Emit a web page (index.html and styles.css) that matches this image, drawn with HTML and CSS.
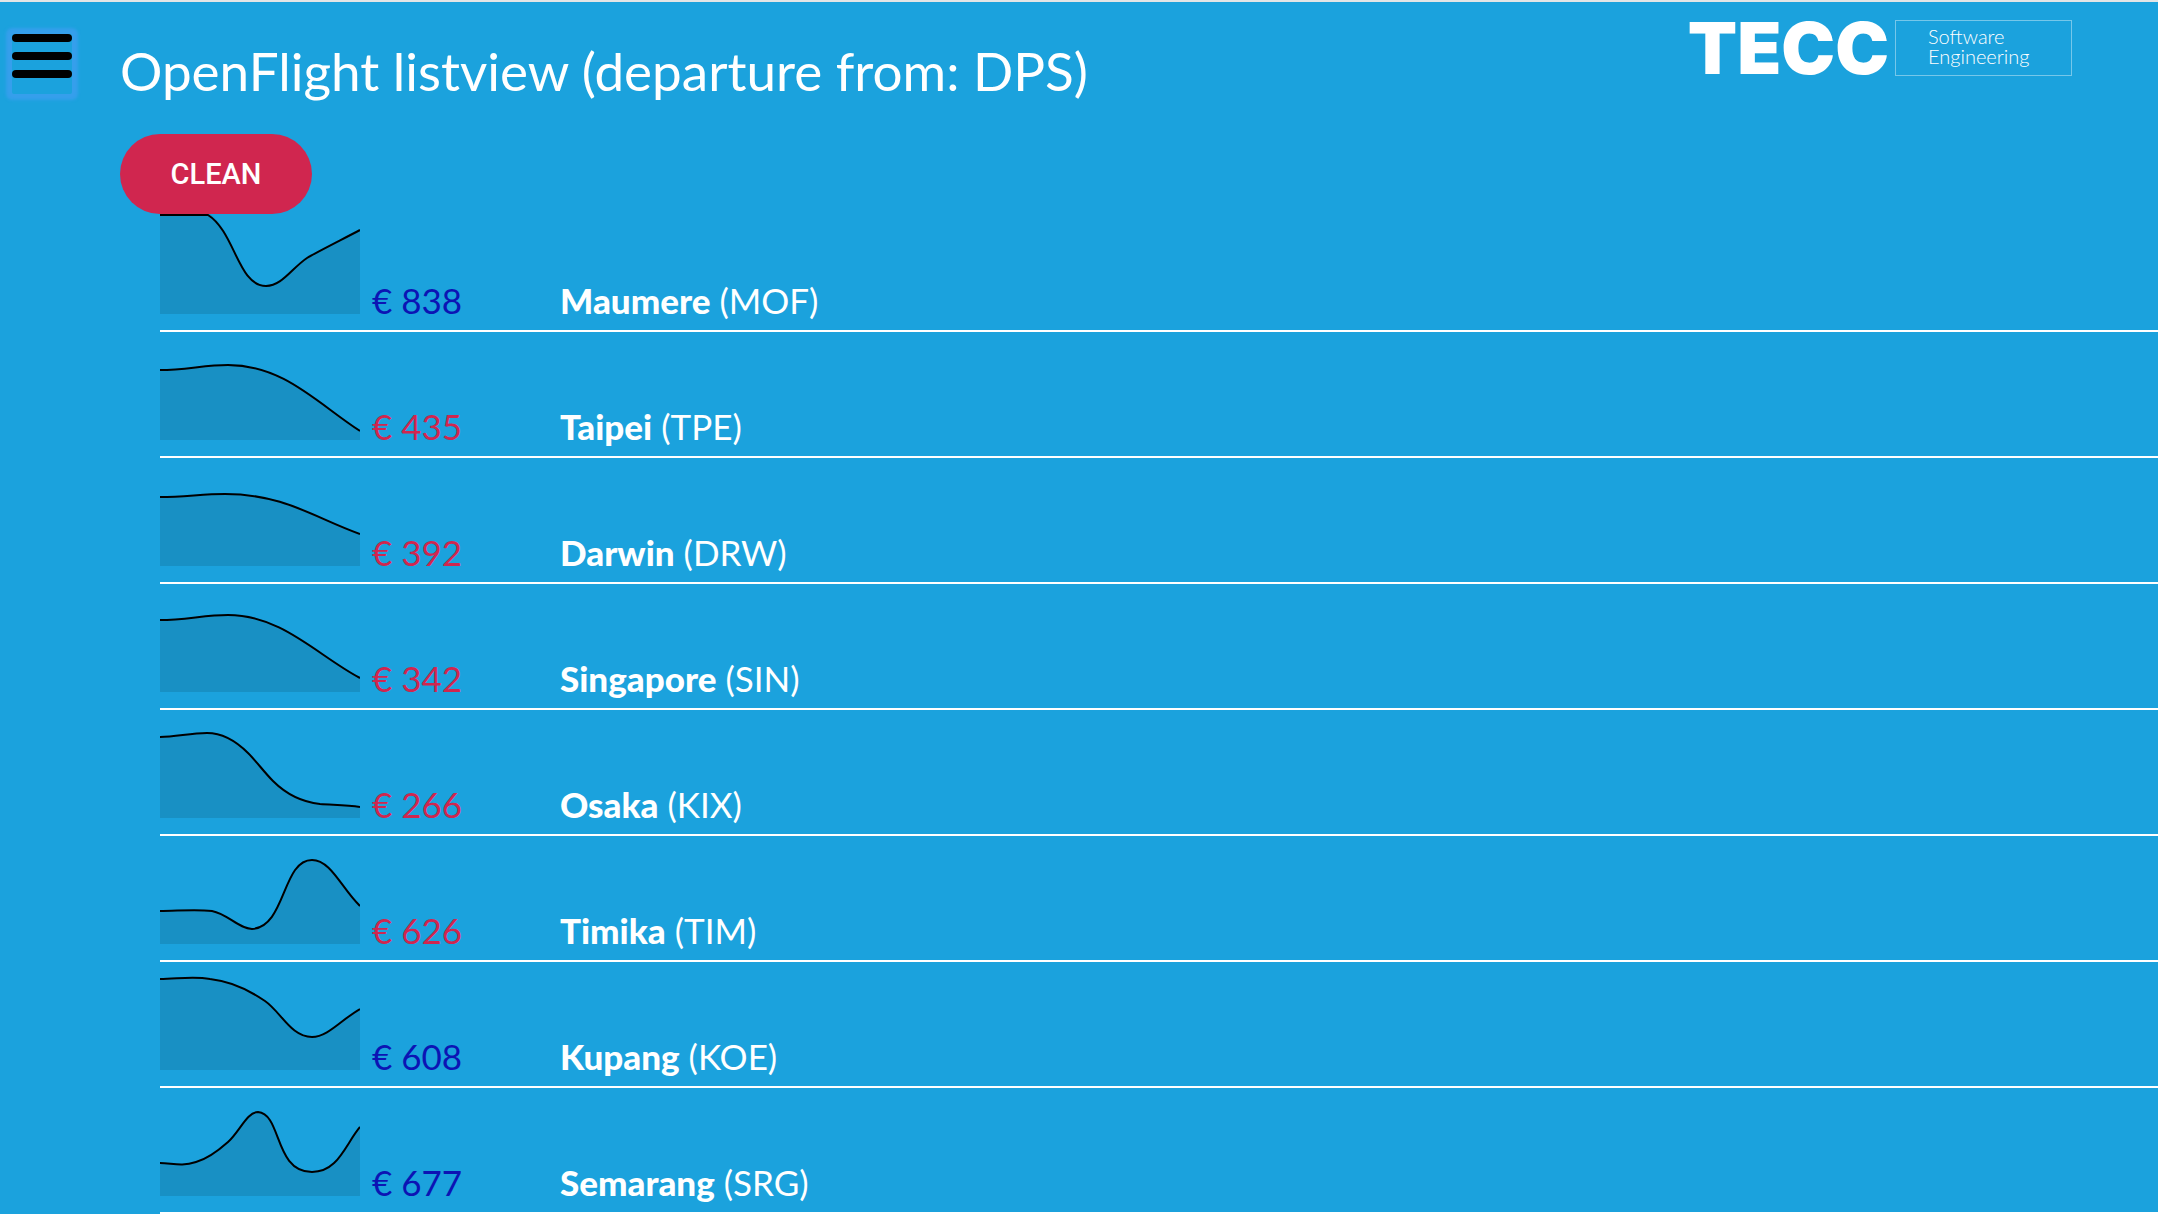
FILE: index.html
```html
<!DOCTYPE html>
<html lang="en">
<head>
<meta charset="utf-8">
<meta name="viewport" content="width=device-width, initial-scale=1">
<title>OpenFlight listview</title>
<link rel="stylesheet" href="styles.css">
</head>
<body>
<nav class="sidebar">
  <button class="menu" type="button" aria-label="Menu">
    <span class="menu-bar"></span><span class="menu-bar"></span><span class="menu-bar"></span>
  </button>
</nav>
<main class="content">
  <header class="header">
    <h1 class="title">OpenFlight listview (departure from: DPS)</h1>
    <div class="logo">
      <span class="logo-name">TECC</span>
      <span class="logo-tag">Software<br>Engineering</span>
    </div>
  </header>
  <button class="clean" type="button">CLEAN</button>
  <ul class="flights">
    <li class="flight">
      <svg class="chart" viewBox="0 0 200 100" aria-hidden="true"><path class="area" d="M0 0H50C75 18 78 72 106 72C122 72 132 54 147 44C155 39 185 24 200 16V100H0Z"/><path class="line" d="M0 1H48C75 18 78 72 106 72C122 72 132 54 147 44C155 39 185 24 200 16"/></svg>
      <span class="price price-up">€ 838</span>
      <span class="place"><strong>Maumere</strong> (MOF)</span>
    </li>
    <li class="flight">
      <svg class="chart" viewBox="0 0 200 100" aria-hidden="true"><path class="area" d="M0 30C25 30 45 25 68 25C124 25 158 64 200 91V100H0Z"/><path class="line" d="M0 30C25 30 45 25 68 25C124 25 158 64 200 91"/></svg>
      <span class="price">€ 435</span>
      <span class="place"><strong>Taipei</strong> (TPE)</span>
    </li>
    <li class="flight">
      <svg class="chart" viewBox="0 0 200 100" aria-hidden="true"><path class="area" d="M0 31C25 31 42 28 65 28C124 28 155 52 200 68V100H0Z"/><path class="line" d="M0 31C25 31 42 28 65 28C124 28 155 52 200 68"/></svg>
      <span class="price">€ 392</span>
      <span class="place"><strong>Darwin</strong> (DRW)</span>
    </li>
    <li class="flight">
      <svg class="chart" viewBox="0 0 200 100" aria-hidden="true"><path class="area" d="M0 28C25 28 45 23 68 23C122 23 158 64 200 86V100H0Z"/><path class="line" d="M0 28C25 28 45 23 68 23C122 23 158 64 200 86"/></svg>
      <span class="price">€ 342</span>
      <span class="place"><strong>Singapore</strong> (SIN)</span>
    </li>
    <li class="flight">
      <svg class="chart" viewBox="0 0 200 100" aria-hidden="true"><path class="area" d="M0 19C16 19 30 15 47 15C64 15 78 25 88 35C97 44 104 54 113 63C127 77 142 84 160 86C174 87 187 87 200 89V100H0Z"/><path class="line" d="M0 19C16 19 30 15 47 15C64 15 78 25 88 35C97 44 104 54 113 63C127 77 142 84 160 86C174 87 187 87 200 89"/></svg>
      <span class="price">€ 266</span>
      <span class="place"><strong>Osaka</strong> (KIX)</span>
    </li>
    <li class="flight">
      <svg class="chart" viewBox="0 0 200 100" aria-hidden="true"><path class="area" d="M0 67C17 67 35 65 52 67C68 70 79 85 92 85C126 83 122 16 152 16C171 16 182 45 200 62V100H0Z"/><path class="line" d="M0 67C17 67 35 65 52 67C68 70 79 85 92 85C126 83 122 16 152 16C171 16 182 45 200 62"/></svg>
      <span class="price">€ 626</span>
      <span class="place"><strong>Timika</strong> (TIM)</span>
    </li>
    <li class="flight">
      <svg class="chart" viewBox="0 0 200 100" aria-hidden="true"><path class="area" d="M0 9C17 9 33 6 50 9C69 11 89 20 105 31C121 42 131 67 152 67C168 67 182 49 200 39V100H0Z"/><path class="line" d="M0 9C17 9 33 6 50 9C69 11 89 20 105 31C121 42 131 67 152 67C168 67 182 49 200 39"/></svg>
      <span class="price price-up">€ 608</span>
      <span class="place"><strong>Kupang</strong> (KOE)</span>
    </li>
    <li class="flight">
      <svg class="chart" viewBox="0 0 200 100" aria-hidden="true"><path class="area" d="M0 67C12 67 21 71 36 66C47 63 59 54 68 46C80 35 87 16 98 16C122 18 114 76 152 76C178 76 185 49 200 31V100H0Z"/><path class="line" d="M0 67C12 67 21 71 36 66C47 63 59 54 68 46C80 35 87 16 98 16C122 18 114 76 152 76C178 76 185 49 200 31"/></svg>
      <span class="price price-up">€ 677</span>
      <span class="place"><strong>Semarang</strong> (SRG)</span>
    </li>
  </ul>
</main>
</body>
</html>
```
FILE: styles.css
```css
* {
  box-sizing: border-box;
}

body {
  margin: 0;
  display: flex;
  border-top: 2px solid #e3e5e6;
  background: #1ba2dd;
  color: #fff;
  font-family: Lato, "Open Sans", sans-serif;
}

.sidebar {
  flex: none;
  width: 120px;
  padding: 32px 12px;
}

.menu {
  display: flex;
  flex-direction: column;
  gap: 10px;
  width: 60px;
  height: 60px;
  padding: 0;
  border: 0;
  border-radius: 2px;
  background: none;
  box-shadow: 0 0 3px 6px #359fec;
}

.menu-bar {
  width: 60px;
  height: 8px;
  border-radius: 4px;
  background: #000;
}

.content {
  flex: 1;
  min-width: 0;
}

.header {
  display: flex;
  justify-content: space-between;
  align-items: flex-start;
  height: 132px;
  padding-right: 86px;
}

.title {
  margin: 38px 0 0;
  font-size: 53px;
  font-weight: 400;
  line-height: 62px;
}

.logo {
  display: flex;
  gap: 6px;
  margin-top: 18px;
}

.logo-name {
  font-family: Inter, sans-serif;
  font-size: 72px;
  font-weight: 900;
  line-height: 56px;
}

.logo-tag {
  width: 177px;
  height: 56px;
  padding: 5px 0 0 32px;
  border: 1px solid rgba(255, 255, 255, 0.4);
  font-size: 20px;
  font-weight: 300;
  line-height: 20px;
}

.clean {
  display: block;
  width: 192px;
  height: 80px;
  border: 0;
  border-radius: 40px;
  background: #d0264f;
  color: #fff;
  font-family: Roboto, sans-serif;
  font-size: 29px;
  font-weight: 500;
}

.flights {
  margin: 0;
  padding: 0 0 0 40px;
  list-style: none;
}

.flight {
  display: grid;
  grid-template-columns: 212px 188px 1fr;
  align-items: baseline;
  padding: 8px 0 10px;
  border-bottom: 2px solid #fff;
  font-size: 35px;
  line-height: 40px;
}

.flight:first-child {
  padding-top: 0;
}

.chart {
  display: block;
  width: 200px;
  height: 100px;
}

.area {
  fill: rgba(0, 0, 0, 0.11);
}

.line {
  fill: none;
  stroke: #000;
  stroke-width: 2;
}

.price {
  color: #d0264f;
}

.price-up {
  color: #0c14b4;
}

.place strong {
  font-weight: 900;
}
```
